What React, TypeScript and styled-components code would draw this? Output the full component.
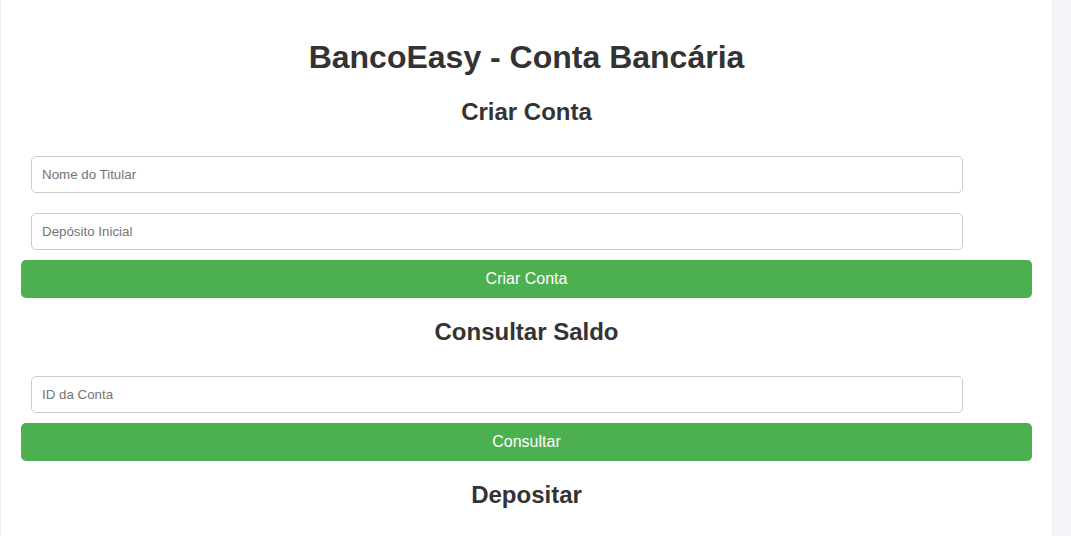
import React from 'react'
import styled, { createGlobalStyle } from 'styled-components'

const GlobalStyle = createGlobalStyle`
    html, body {
        margin: 0;
        padding: 0;
        background-color: #f4f4f9;
        font-family: "Liberation Sans", Arial, sans-serif;
        color: #333;
    }
`

type FieldType = {
    placeholder: string,
    type?: string,
}

type SectionPropsType = {
    title: string,
    fields: FieldType[],
    action: string,
}

const sections: SectionPropsType[] = [
    {
        title: 'Criar Conta',
        fields: [
            { placeholder: 'Nome do Titular' },
            { placeholder: 'Depósito Inicial', type: 'number' },
        ],
        action: 'Criar Conta',
    },
    {
        title: 'Consultar Saldo',
        fields: [{ placeholder: 'ID da Conta', type: 'number' }],
        action: 'Consultar',
    },
    {
        title: 'Depositar',
        fields: [
            { placeholder: 'ID da Conta', type: 'number' },
            { placeholder: 'Valor do Depósito', type: 'number' },
        ],
        action: 'Depositar',
    },
    {
        title: 'Sacar',
        fields: [
            { placeholder: 'ID da Conta', type: 'number' },
            { placeholder: 'Valor do Saque', type: 'number' },
        ],
        action: 'Sacar',
    },
]

const Section = (props: SectionPropsType) => {
    return (
        <>
            <SectionTitle>{props.title}</SectionTitle>
            <Form onSubmit={(e) => e.preventDefault()}>
                {props.fields.map((f, i) => (
                    <Input key={i} type={f.type || 'text'} placeholder={f.placeholder} />
                ))}
                <Button type="submit">{props.action}</Button>
            </Form>
        </>
    )
}

export default function App() {
    return (
        <>
            <GlobalStyle />
            <Container>
                <Title>BancoEasy - Conta Bancária</Title>
                {sections.map((s) => (
                    <Section key={s.title} {...s} />
                ))}
            </Container>
        </>
    )
}

const Container = styled.div`
    box-sizing: border-box;
    width: 1051px;
    margin-left: 1px;
    padding: 18px 20px 20px;
    background-color: #fff;
    box-shadow: 0 0 2px rgba(0, 0, 0, 0.08);
`

const Title = styled.h1`
    margin: 21.44px 0;
    font-size: 32px;
    font-weight: bold;
    text-align: center;
    color: #333;
`

const SectionTitle = styled.h2`
    margin: 19.92px 0;
    font-size: 24px;
    font-weight: bold;
    text-align: center;
    color: #333;
`

const Form = styled.form`
    display: flex;
    flex-direction: column;
`

const Input = styled.input`
    align-self: flex-start;
    width: 90%;
    margin: 10px;
    padding: 10px;
    border: 1px solid #ccc;
    border-radius: 5px;
    font-family: "Liberation Sans", Arial, sans-serif;
    font-size: 13.333px;
    color: #333;
    background: #fff;
    outline: none;

    &::placeholder {
        color: #757575;
    }

    &::-webkit-inner-spin-button,
    &::-webkit-outer-spin-button {
        -webkit-appearance: none;
        margin: 0;
    }
`

const Button = styled.button`
    width: 100%;
    padding: 10px;
    border: none;
    border-radius: 5px;
    background-color: #4caf50;
    color: #fff;
    font-family: "Liberation Sans", Arial, sans-serif;
    font-size: 16px;
    cursor: pointer;
`
